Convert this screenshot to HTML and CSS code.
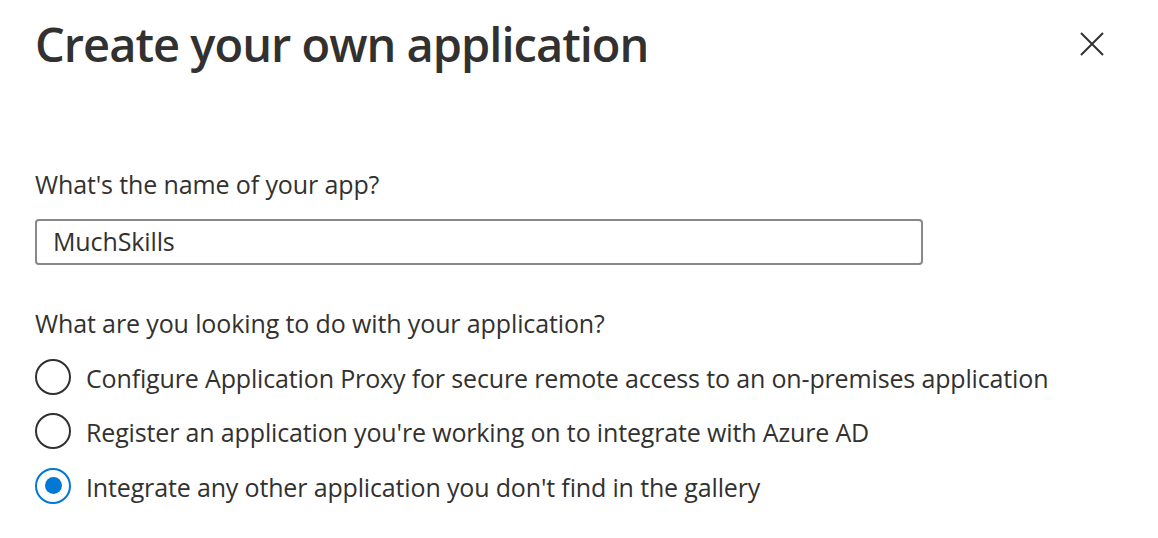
FILE: index.html
```html
<!DOCTYPE html>
<html lang="en">
<head>
<meta charset="utf-8">
<title>Create your own application</title>
<link rel="stylesheet" href="styles.css">
</head>
<body>
<div class="panel">
  <header class="panel-header">
    <h1 class="panel-title">Create your own application</h1>
    <button class="close-btn" aria-label="Close">
      <svg width="24" height="24" viewBox="0 0 24 24"><path d="M1 1 L23 23 M23 1 L1 23" stroke="#323130" stroke-width="2" fill="none"/></svg>
    </button>
  </header>
  <div class="field field-name">
    <label class="field-label" for="appname">What's the name of your app?</label>
    <div class="text-input"><span id="appname">MuchSkills</span></div>
  </div>
  <div class="field field-purpose">
    <div class="field-label">What are you looking to do with your application?</div>
    <div class="choices">
      <div class="choice"><span class="radio"></span><span class="choice-text">Configure Application Proxy for secure remote access to an on-premises application</span></div>
      <div class="choice"><span class="radio"></span><span class="choice-text">Register an application you're working on to integrate with Azure AD</span></div>
      <div class="choice"><span class="radio checked"></span><span class="choice-text">Integrate any other application you don't find in the gallery</span></div>
    </div>
  </div>
</div>
</body>
</html>
```
FILE: styles.css
```css
html, body { margin: 0; padding: 0; background: #ffffff; }
body { font-family: "Open Sans", "Noto Sans", sans-serif; color: #323130; }
.panel { padding: 0 0 0 35px; width: 1123px; }
.panel-header { display: flex; justify-content: space-between; align-items: flex-start; height: 100px; }
.panel-title { margin: 14px 0 0 0; font-size: 47px; font-weight: 600; line-height: 60px; letter-spacing: -1px; }
.close-btn { border: 0; background: none; padding: 0; margin: 32px 54px 0 0; width: 24px; height: 24px; display: block; }
.close-btn svg { display: block; }
.field-label { display: block; font-size: 25px; line-height: 30px; letter-spacing: -0.12px; }
.field-name { margin-top: 69px; }
.field-purpose { margin-top: 43px; }
.text-input { margin-top: 20px; width: 868px; height: 39px; padding: 0 0 3px 16px; border: 2px solid #8a8886; border-radius: 4px; display: flex; align-items: center; font-size: 25px; line-height: 30px; letter-spacing: -0.12px; }
.choices { display: flex; flex-direction: column; gap: 18.5px; margin-top: 20.5px; }
.choice { display: flex; align-items: center; gap: 15px; height: 36px; font-size: 25px; line-height: 30px; letter-spacing: -0.15px; }
.choice-text { padding-top: 2px; }
.radio { width: 32px; height: 32px; border: 2px solid #323130; border-radius: 50%; flex: none; display: flex; align-items: center; justify-content: center; }
.radio.checked { border-color: #0078d4; }
.radio.checked::after { content: ""; width: 17px; height: 17px; border-radius: 50%; background: #0078d4; }
```
